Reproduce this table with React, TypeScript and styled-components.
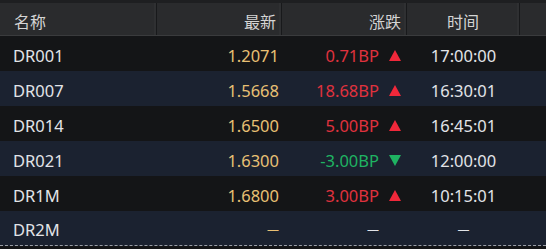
import React from "react";
import styled, { createGlobalStyle } from "styled-components";

const Global = createGlobalStyle`
  html, body { margin: 0; padding: 0; background: #141517; }
  body { font-family: "Noto Sans", "Noto Sans CJK SC", sans-serif; }
`;

const COLS = "157px 125px 125px 113px 1fr";

const Table = styled.div`
  width: 546px;
  height: 249px;
  background: #141517;
  display: flex;
  flex-direction: column;
  overflow: hidden;
`;

const Header = styled.div`
  display: grid;
  grid-template-columns: ${COLS};
  height: 32px;
  border-top: 3px solid #1e1f21;
  background: #2a2b2d;
  border-bottom: 1px solid #3a3b3d;
`;

const HeadCell = styled.div<{ $align: "left" | "right" | "center" }>`
  display: flex;
  align-items: center;
  justify-content: ${(p) =>
    p.$align === "left" ? "flex-start" : p.$align === "right" ? "flex-end" : "center"};
  padding: 3px ${(p) => (p.$align === "right" ? "5px" : "0")} 0
    ${(p) => (p.$align === "left" ? "14px" : "0")};
  color: #d4d4d4;
  font-size: 16px;
  border-right: 1px solid #18191b;
  box-shadow: inset -2px 0 0 #2f3032;
  &:last-child { border-right: none; box-shadow: none; }
`;

const Row = styled.div<{ $alt: boolean }>`
  display: grid;
  grid-template-columns: ${COLS};
  height: 35px;
  padding-top: 3px;
  box-sizing: border-box;
  background: ${(p) => (p.$alt ? "#1b2230" : "#141517")};
  font-size: 16.5px;
  &:last-child { border-bottom: 1px dashed #9a9ea6; }
`;

const Name = styled.div`
  display: flex;
  align-items: center;
  padding-left: 13px;
  color: #e2e4e8;
`;

const Price = styled.div`
  display: flex;
  align-items: center;
  justify-content: flex-end;
  padding-right: 3px;
  color: #e8c074;
`;

const Change = styled.div<{ $dir: "up" | "down" | "none" }>`
  display: flex;
  align-items: center;
  justify-content: flex-end;
  gap: 10px;
  padding-right: 6px;
  color: ${(p) => (p.$dir === "up" ? "#e0323e" : p.$dir === "down" ? "#1fb362" : "#e2e4e8")};
`;

const Arrow = styled.span`
  width: 12px;
  height: 12px;
  display: flex;
  align-items: center;
  justify-content: center;
`;

const Time = styled.div`
  display: flex;
  align-items: center;
  justify-content: center;
  color: #e2e4e8;
`;

const Dash = styled.span`
  font-size: 12px;
`;

type Item = { name: string; price: string; change: string; dir: "up" | "down" | "none"; time: string };

const data: Item[] = [
  { name: "DR001", price: "1.2071", change: "0.71BP", dir: "up", time: "17:00:00" },
  { name: "DR007", price: "1.5668", change: "18.68BP", dir: "up", time: "16:30:01" },
  { name: "DR014", price: "1.6500", change: "5.00BP", dir: "up", time: "16:45:01" },
  { name: "DR021", price: "1.6300", change: "-3.00BP", dir: "down", time: "12:00:00" },
  { name: "DR1M", price: "1.6800", change: "3.00BP", dir: "up", time: "10:15:01" },
  { name: "DR2M", price: "—", change: "—", dir: "none", time: "—" },
];

const Val = ({ v }: { v: string }) => (v === "—" ? <Dash>—</Dash> : <>{v}</>);

const Tri = ({ dir }: { dir: "up" | "down" | "none" }) => {
  if (dir === "none") return <Arrow />;
  return (
    <Arrow>
      <svg width="12" height="11" viewBox="0 0 12 11">
        {dir === "up" ? (
          <polygon points="6,0 12,11 0,11" fill="#f0283a" />
        ) : (
          <polygon points="0,0 12,0 6,11" fill="#1fb362" />
        )}
      </svg>
    </Arrow>
  );
};

export default function App() {
  return (
    <>
      <Global />
      <Table>
        <Header>
          <HeadCell $align="left">名称</HeadCell>
          <HeadCell $align="right">最新</HeadCell>
          <HeadCell $align="right">涨跌</HeadCell>
          <HeadCell $align="center">时间</HeadCell>
          <HeadCell $align="center" />
        </Header>
        {data.map((d, i) => (
          <Row key={d.name} $alt={i % 2 === 1}>
            <Name>{d.name}</Name>
            <Price><Val v={d.price} /></Price>
            <Change $dir={d.dir}>
              <Val v={d.change} />
              <Tri dir={d.dir} />
            </Change>
            <Time><Val v={d.time} /></Time>
            <div />
          </Row>
        ))}
      </Table>
    </>
  );
}
